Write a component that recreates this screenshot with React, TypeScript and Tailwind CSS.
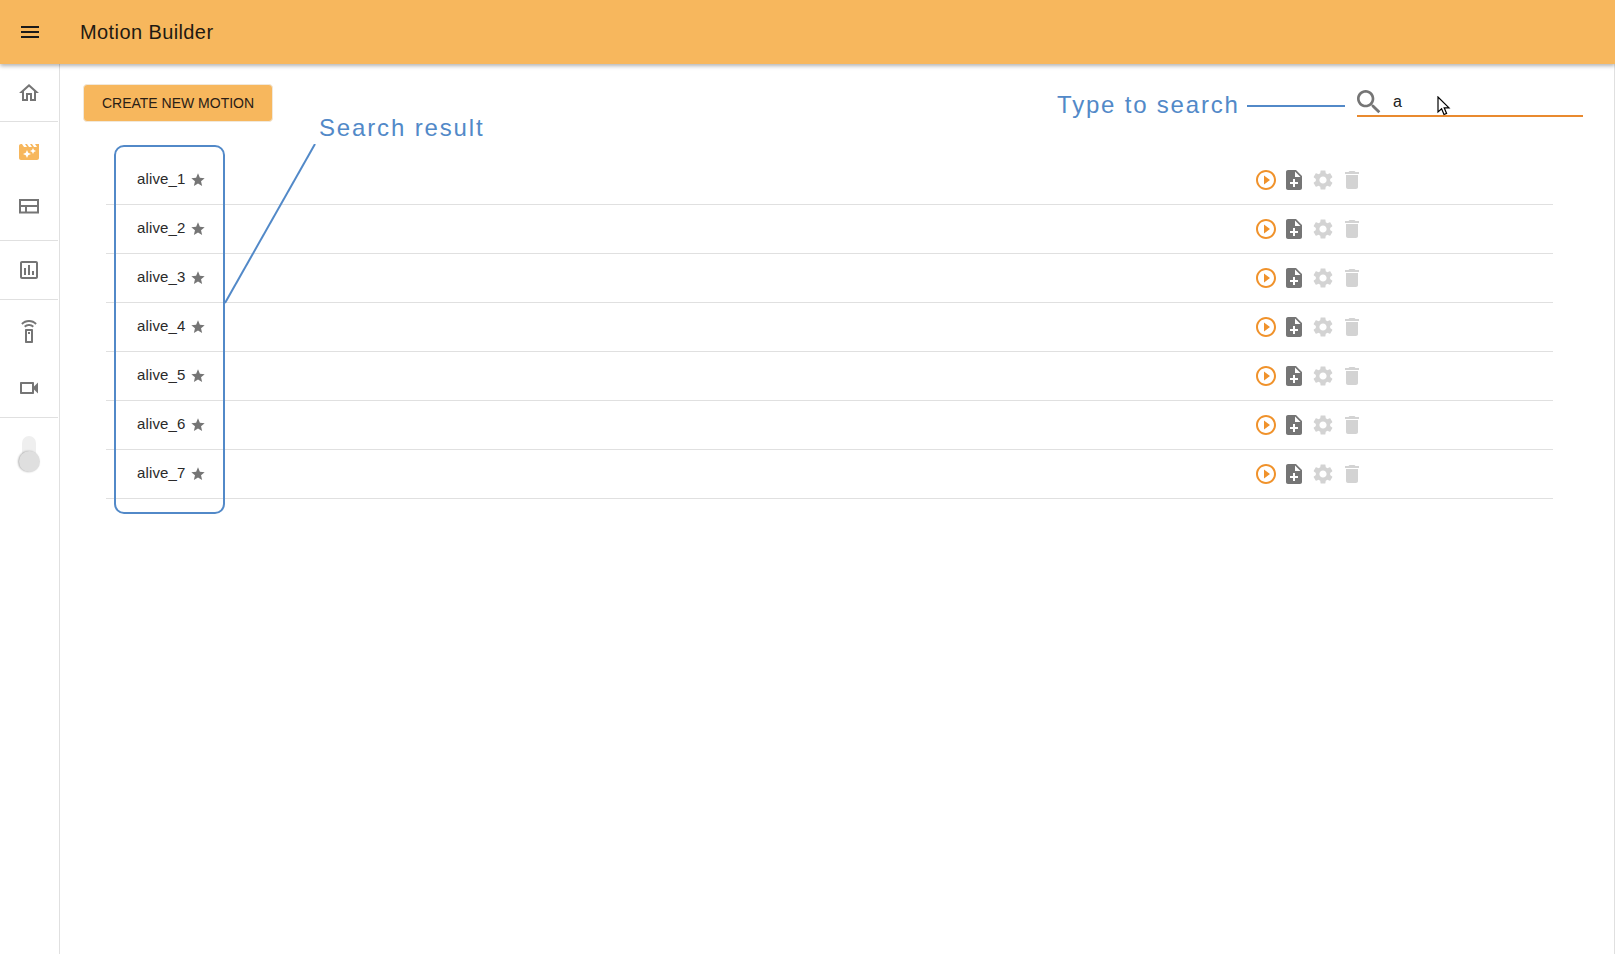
const FONT = "font-['Liberation_Sans',Arial,sans-serif]";

const paths = {
  menu: 'M3 18h18v-2H3v2zm0-5h18v-2H3v2zm0-7v2h18V6H3z',
  home: 'M12 5.69l5 4.5V18h-2v-6H9v6H7v-7.81l5-4.5M12 3L2 12h3v8h6v-6h2v6h6v-8h3L12 3z',
  movie:
    'M18 4l2 3h-3l-2-3h-2l2 3h-3l-2-3H8l2 3H7L5 4H4c-1.1 0-1.99.9-1.99 2L2 18c0 1.1.9 2 2 2h16c1.1 0 2-.9 2-2V4h-4zm-6.75 11.25L10 18l-1.25-2.75L6 14l2.75-1.25L10 10l1.25 2.75L14 14l-2.75 1.25zm5.69-3.31L16 14l-.94-2.06L13 11l2.06-.94L16 8l.94 2.06L19 11l-2.06.94z',
  table: 'M2 5h20v14.5H2V5zm2 2v4h16V7H4zm0 6v4.5h4V13H4zm6 0v4.5h10V13H10z',
  chart:
    'M19 3H5c-1.1 0-2 .9-2 2v14c0 1.1.9 2 2 2h14c1.1 0 2-.9 2-2V5c0-1.1-.9-2-2-2zm0 16H5V5h14v14zM7 10h2v7H7zm4-3h2v10h-2zm4 6h2v4h-2z',
  remote:
    'M9 9h6c.55 0 1 .45 1 1v12c0 .55-.45 1-1 1H9c-.55 0-1-.45-1-1V10c0-.55.45-1 1-1zm1 2v10h4V11h-4zm1 1h2v2h-2zM7.05 6.05l1.41 1.41C9.37 6.56 10.62 6 12 6s2.63.56 3.54 1.46l1.41-1.41C15.68 4.78 13.93 4 12 4s-3.68.78-4.95 2.05zM12 0C8.96 0 6.21 1.23 4.22 3.22l1.41 1.41C7.26 3.01 9.51 2 12 2s4.74 1.01 6.36 2.64l1.41-1.41C17.79 1.23 15.04 0 12 0z',
  video:
    'M15 8v8H5V8h10m1-2H4c-.55 0-1 .45-1 1v10c0 .55.45 1 1 1h12c.55 0 1-.45 1-1v-3.5l4 4v-11l-4 4V7c0-.55-.45-1-1-1z',
  star: 'M12 17.27L18.18 21l-1.64-7.03L22 9.24l-7.19-.61L12 2 9.19 8.63 2 9.24l5.46 4.73L5.82 21z',
  play: 'M10 16.5l6-4.5-6-4.5v9zM12 2C6.48 2 2 6.48 2 12s4.48 10 10 10 10-4.48 10-10S17.52 2 12 2zm0 18c-4.41 0-8-3.59-8-8s3.59-8 8-8 8 3.59 8 8-3.59 8-8 8z',
  noteAdd:
    'M14 2H6c-1.1 0-1.99.9-1.99 2L4 20c0 1.1.89 2 1.99 2H18c1.1 0 2-.9 2-2V8l-6-6zm2 14h-3v3h-2v-3H8v-2h3v-3h2v3h3v2zm-3-7V3.5L18.5 9H13z',
  settings:
    'M19.14 12.94c.04-.3.06-.61.06-.94 0-.32-.02-.64-.07-.94l2.03-1.58c.18-.14.23-.41.12-.61l-1.92-3.32c-.12-.22-.37-.29-.59-.22l-2.39.96c-.5-.38-1.03-.7-1.62-.94l-.36-2.54c-.04-.24-.24-.41-.48-.41h-3.84c-.24 0-.43.17-.47.41l-.36 2.54c-.59.24-1.13.57-1.62.94l-2.39-.96c-.22-.08-.47 0-.59.22L2.74 8.87c-.12.21-.08.47.12.61l2.03 1.58c-.05.3-.09.63-.09.94s.02.64.07.94l-2.03 1.58c-.18.14-.23.41-.12.61l1.92 3.32c.12.22.37.29.59.22l2.39-.96c.5.38 1.03.7 1.62.94l.36 2.54c.05.24.24.41.48.41h3.84c.24 0 .44-.17.47-.41l.36-2.54c.59-.24 1.13-.56 1.62-.94l2.39.96c.22.08.47 0 .59-.22l1.92-3.32c.12-.22.07-.47-.12-.61l-2.01-1.58zM12 15.6c-1.98 0-3.6-1.62-3.6-3.6s1.62-3.6 3.6-3.6 3.6 1.62 3.6 3.6-1.62 3.6-3.6 3.6z',
  trash: 'M6 19c0 1.1.9 2 2 2h8c1.1 0 2-.9 2-2V7H6v12zM19 4h-3.5l-1-1h-5l-1 1H5v2h14V4z',
  search:
    'M15.5 14h-.79l-.28-.27C15.41 12.59 16 11.11 16 9.5 16 5.91 13.09 3 9.5 3S3 5.91 3 9.5 5.91 16 9.5 16c1.61 0 3.09-.59 4.23-1.57l.27.28v.79l5 4.99L20.49 19l-4.99-5zm-6 0C7.01 14 5 11.99 5 9.5S7.01 5 9.5 5 14 7.01 14 9.5 11.99 14 9.5 14z',
};

function Icon({ d, className }: { d: string; className: string }) {
  return (
    <svg viewBox="0 0 24 24" fill="currentColor" fillRule="evenodd" className={className}>
      <path d={d} />
    </svg>
  );
}

const motions = ['alive_1', 'alive_2', 'alive_3', 'alive_4', 'alive_5', 'alive_6', 'alive_7'];

function Sidebar() {
  return (
    <aside className="w-[60px] shrink-0 border-r border-[#e0e0e0] pr-px text-[#757575]">
      <div className="flex h-[58px] items-center justify-center border-b border-[#e0e0e0]">
        <Icon d={paths.home} className="size-6" />
      </div>
      <div className="flex h-[119px] flex-col items-center gap-[30px] border-b border-[#e0e0e0] pt-[18px]">
        <Icon d={paths.movie} className="size-6 text-[#f7b75d]" />
        <Icon d={paths.table} className="size-6" />
      </div>
      <div className="flex h-[59px] items-center justify-center border-b border-[#e0e0e0]">
        <Icon d={paths.chart} className="size-6" />
      </div>
      <div className="flex h-[118px] flex-col items-center gap-[32px] border-b border-[#e0e0e0] pt-[20px]">
        <Icon d={paths.remote} className="size-6" />
        <Icon d={paths.video} className="size-6" />
      </div>
      {/* vertical theme switch */}
      <div className="relative mx-auto mt-[18px] h-[34px] w-[14px] rounded-full bg-[#efefef]">
        <div className="absolute -left-[3.5px] top-[15px] size-[21px] rounded-full bg-[#dfdfdf] shadow-[-1px_0_2px_rgba(0,0,0,0.3)]" />
      </div>
    </aside>
  );
}

function MotionRow({ name }: { name: string }) {
  return (
    <div className="flex h-[49px] items-center border-b border-[#e0e0e0]">
      <div className="flex w-[1148px] items-center gap-[4px] pb-[3px] pl-[31px]">
        <span className="text-[15px] leading-[20px] tracking-[0.15px] text-[#2a2a2a]">{name}</span>
        <Icon d={paths.star} className="mt-[2px] size-4 text-[#757575]" />
      </div>
      <div className="flex items-center gap-[4.7px]">
        <Icon d={paths.play} className="size-6 text-[#f0922b]" />
        <Icon d={paths.noteAdd} className="-ml-[0.5px] size-6 text-[#757575]" />
        <Icon d={paths.settings} className="size-6 text-[#d3d3d3]" />
        <Icon d={paths.trash} className="size-6 text-[#d3d3d3]" />
      </div>
    </div>
  );
}

export default function App() {
  return (
    <div className={`flex h-[954px] w-[1615px] flex-col overflow-hidden bg-white ${FONT}`}>
      <header className="relative z-10 flex h-[64px] shrink-0 items-center bg-[#f7b75d] shadow-[0_2px_4px_rgba(0,0,0,0.3)]">
        <Icon d={paths.menu} className="ml-[18px] size-6 text-[#1a1a1a]" />
        <h1 className="ml-[38px] text-[20px] leading-none tracking-[0.4px] text-[#1f1a12]">Motion Builder</h1>
      </header>

      <div className="flex min-h-0 flex-1">
        <Sidebar />

        <main className="relative flex-1 border-r border-[#e0e0e0]">
          <div className="flex items-start justify-between pl-[23px] pr-[31px] pt-[20px]">
            <button className="h-[38px] w-[190px] rounded border border-[#f1e8da] bg-[#f7b75d] text-[14px] text-[#2a2016]">
              CREATE NEW MOTION
            </button>
            <div className="flex h-[33px] w-[226px] items-center border-b-2 border-[#e98a2f] text-[16px] text-[#212121]">
              <Icon d={paths.search} className="-ml-[4px] mt-[5px] size-8 shrink-0 text-[#757575]" />
              <span className="ml-[8px] mt-[5px]">a</span>
            </div>
          </div>

          <div className="ml-[46px] mr-[61px] mt-[34px]">
            {motions.map(m => (
              <MotionRow key={m} name={m} />
            ))}
          </div>

          {/* annotations drawn over the screenshot */}
          <div className="absolute left-[54px] top-[81px] h-[369px] w-[111px] rounded-[10px] border-2 border-[#5289c8]" />
          <svg className="absolute left-[164px] top-[80px]" width="92" height="160" fill="none">
            <path d="M1 159 L91 0" stroke="#5289c8" strokeWidth="2" />
          </svg>
          <span className="absolute left-[259px] top-[48px] text-[24px] leading-[32px] tracking-[1.85px] text-[#5289c8]">
            Search result
          </span>
          <span className="absolute left-[997px] top-[25px] text-[24px] leading-[32px] tracking-[1.8px] text-[#5289c8]">
            Type to search
          </span>
          <div className="absolute left-[1187px] top-[41px] h-[2px] w-[98px] bg-[#5289c8]" />
          <svg className="absolute left-[1377px] top-[32px]" width="14" height="20" viewBox="0 0 14 20">
            <path d="M1 1 V16 L4.6 12.8 L7 18.5 L9.6 17.4 L7.2 11.8 H12 Z" fill="#fff" stroke="#000" strokeWidth="1.2" />
          </svg>
        </main>
      </div>
    </div>
  );
}
